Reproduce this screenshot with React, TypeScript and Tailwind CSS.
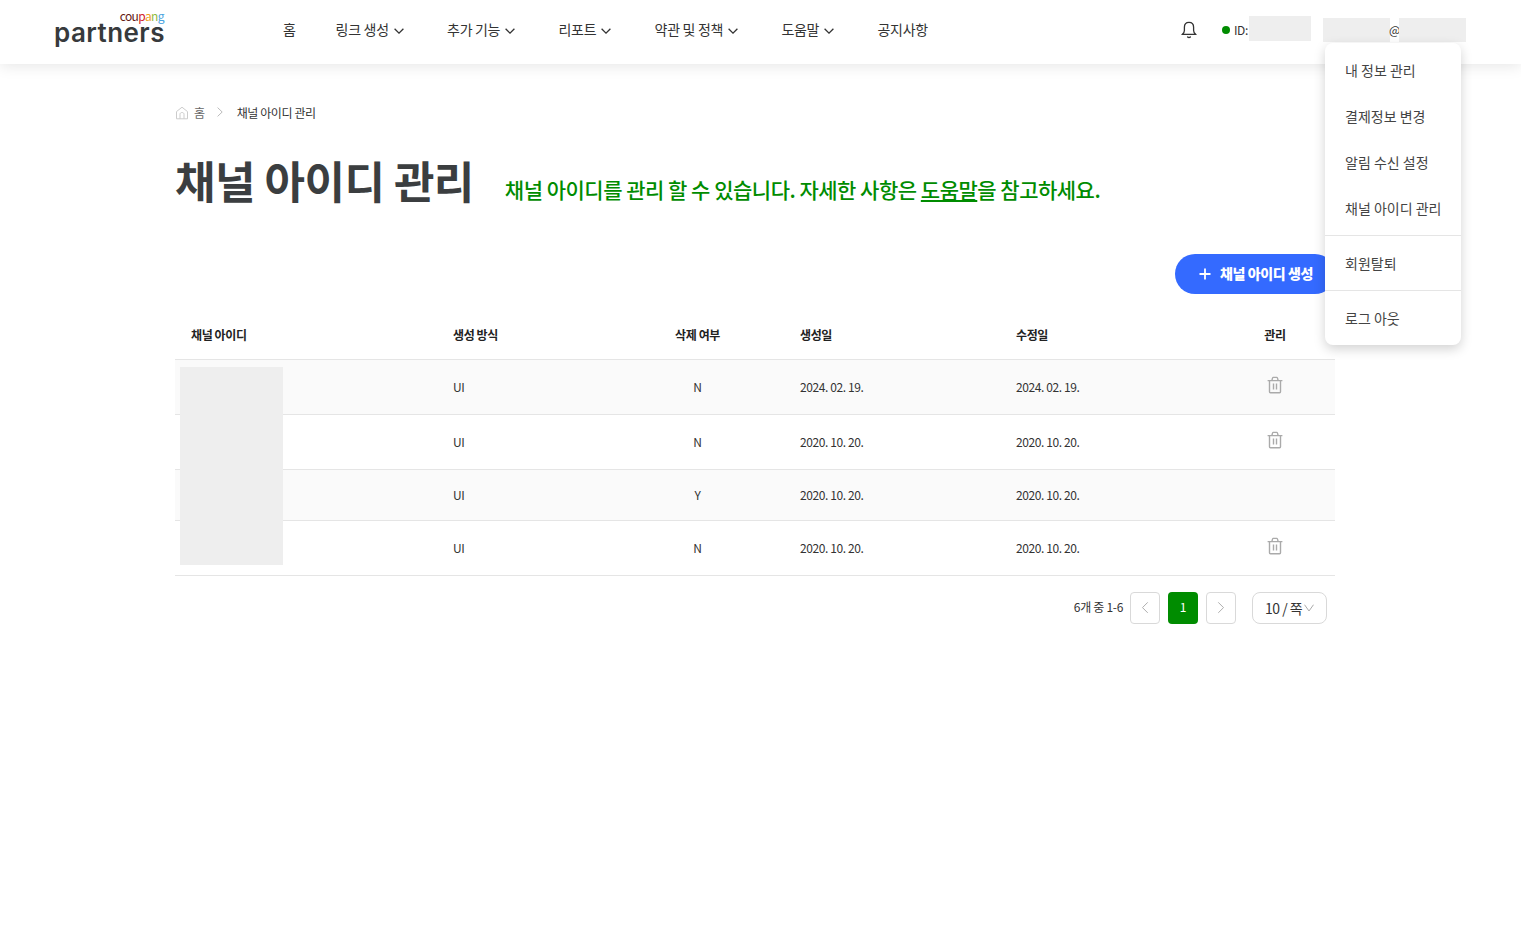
const navItems = [
  { label: "홈", menu: false },
  { label: "링크 생성", menu: true },
  { label: "추가 기능", menu: true },
  { label: "리포트", menu: true },
  { label: "약관 및 정책", menu: true },
  { label: "도움말", menu: true },
  { label: "공지사항", menu: false },
];

const rows = [
  { type: "UI", deleted: "N", created: "2024. 02. 19.", updated: "2024. 02. 19." },
  { type: "UI", deleted: "N", created: "2020. 10. 20.", updated: "2020. 10. 20." },
  { type: "UI", deleted: "Y", created: "2020. 10. 20.", updated: "2020. 10. 20." },
  { type: "UI", deleted: "N", created: "2020. 10. 20.", updated: "2020. 10. 20." },
];

const accountMenu = [
  ["내 정보 관리", "결제정보 변경", "알림 수신 설정", "채널 아이디 관리"],
  ["회원탈퇴"],
  ["로그 아웃"],
];

function Chevron({ className }: { className: string }) {
  return (
    <svg viewBox="0 0 10 6" fill="none" stroke="currentColor" className={className}>
      <path d="M0.6 0.7 5 5.1 9.4 0.7" />
    </svg>
  );
}

function BellIcon() {
  return (
    <svg viewBox="0 0 16 18" fill="none" stroke="#333" strokeWidth="1.3" strokeLinecap="round" className="h-[18px] w-4">
      <path d="M1 13.4h14M1.4 13.2c1.4-1.2 2-2.2 2-3.8V6.2C3.4 3.2 5 1.3 8 1.3s4.6 1.9 4.6 4.9v3.2c0 1.6.6 2.6 2 3.8" />
      <path d="M6.6 15.9c.8.7 2 .7 2.8 0" />
    </svg>
  );
}

function TrashIcon() {
  return (
    <svg viewBox="0 0 16 18" fill="none" stroke="#aaa" strokeWidth="1.4" className="h-[18px] w-4">
      <path d="M.6 4.6h14.8M2.5 4.6v11.2c0 .6.3.9.9.9h9.2c.6 0 .9-.3.9-.9V4.6" />
      <path d="M4.9 4.4 5.6 1.9c.1-.4.3-.5.7-.5h3.4c.4 0 .6.1.7.5l.7 2.5M6.5 7.5v6M9.5 7.5v6" />
    </svg>
  );
}

function Header() {
  return (
    <header className="flex h-16 items-start bg-white pl-[54px] shadow-[0_2px_14px_rgba(0,0,0,0.1)]">
      <div className="flex w-[229px] flex-col">
        <div className="w-[110px] pt-[9px] text-right font-['Noto_Sans_CJK_KR',sans-serif] text-[12px] leading-[13px] tracking-[-0.6px]">
          <span className="text-[#641a14]">cou</span>
          <span className="text-[#d3222d]">p</span>
          <span className="text-[#f0a01e]">a</span>
          <span className="text-[#8fbb40]">n</span>
          <span className="text-[#4aa3e0]">g</span>
        </div>
        <div className="-mt-[4px] font-[Inter,sans-serif] text-[26px] leading-[30px] font-semibold tracking-[0.45px] text-[#373a3c]">
          partners
        </div>
      </div>
      <nav className="flex h-[58px] items-center gap-10 text-[14px] text-[#333]">
        {navItems.map((item) => (
          <a key={item.label} href="#" className="flex items-center whitespace-nowrap">
            {item.label}
            {item.menu && <Chevron className="mt-[4px] mr-[3.3px] ml-[5px] w-[10px] stroke-[1.3]" />}
          </a>
        ))}
      </nav>
      <div className="ml-auto flex h-[60px] items-center pr-[55px] text-[12px] tracking-[-0.4px] text-[#333]">
        <BellIcon />
        <span className="ml-[25px] size-2 rounded-full bg-[#008c00]" />
        <span className="ml-[4px] w-[15px]">ID:</span>
        <span className="-mt-[3px] h-[25px] w-[62px] bg-[#eee]" />
        <span className="ml-3 h-6 w-[67px] bg-[#eee]" />
        <span className="-ml-px w-[10px]">@</span>
        <span className="h-6 w-[67px] bg-[#eee]" />
      </div>
    </header>
  );
}

function AccountMenu() {
  return (
    <div className="absolute top-[43px] left-[1325px] w-[136px] divide-y divide-[#e5e5e5] rounded-lg bg-white text-[14px] tracking-normal text-[#444] shadow-[0_4px_12px_rgba(0,0,0,0.18)]">
      {accountMenu.map((group) => (
        <ul key={group[0]} className="py-1">
          {group.map((label) => (
            <li key={label} className="flex h-[46px] items-center pl-5 whitespace-nowrap">
              {label}
            </li>
          ))}
        </ul>
      ))}
    </div>
  );
}

function ChannelTable() {
  return (
    <div className="relative mt-[15px]">
      <table className="w-[1160px] table-fixed border-separate border-spacing-0 text-left text-[12px] tracking-[-0.4px] text-[#333]">
        <colgroup>
          <col className="w-[262px]" />
          <col className="w-[174px]" />
          <col className="w-[173px]" />
          <col className="w-[216px]" />
          <col className="w-[215px]" />
          <col className="w-[120px]" />
        </colgroup>
        <thead>
          <tr className="h-[51px] font-bold text-[#222] [&>th]:border-b [&>th]:border-[#e5e5e5] [&>th]:px-4 [&>th]:pt-px">
            <th>채널 아이디</th>
            <th>생성 방식</th>
            <th className="text-center">삭제 여부</th>
            <th>생성일</th>
            <th>수정일</th>
            <th className="text-center">관리</th>
          </tr>
        </thead>
        <tbody>
          {rows.map((row, i) => (
            <tr
              key={i}
              className={`${row.deleted === "Y" ? "h-[51px]" : "h-[55px]"} odd:bg-[#fafafa] [&>td]:border-b [&>td]:border-[#e5e5e5] [&>td]:px-4`}
            >
              <td />
              <td>{row.type}</td>
              <td className="text-center">{row.deleted}</td>
              <td>{row.created}</td>
              <td>{row.updated}</td>
              <td>
                {row.deleted === "N" && (
                  <div className="flex justify-center pb-[5px]">
                    <TrashIcon />
                  </div>
                )}
              </td>
            </tr>
          ))}
        </tbody>
      </table>
      <div className="absolute top-[58px] left-[5px] h-[198px] w-[103px] bg-[#eee]" />
    </div>
  );
}

function Pagination() {
  return (
    <div className="mt-4 flex h-8 items-center justify-end pr-2 text-[12px] text-[#333]">
      <span className="mr-[7px] pb-[2px]">6개 중 1-6</span>
      <button className="flex h-8 w-[30px] items-center justify-center rounded border border-[#d9d9d9] text-[#aaa]">
        <Chevron className="w-3 rotate-90 stroke-[0.8]" />
      </button>
      <button className="ml-2 h-8 w-[30px] rounded bg-[#008c00] pb-[2px] text-white">1</button>
      <button className="ml-2 flex h-8 w-[30px] items-center justify-center rounded border border-[#d9d9d9] text-[#aaa]">
        <Chevron className="w-3 -rotate-90 stroke-[0.8]" />
      </button>
      <button className="ml-4 flex h-8 w-[75px] items-center rounded-lg border border-[#d9d9d9] pl-3 text-[14px] tracking-[-0.5px]">
        <span className="whitespace-nowrap">10 / 쪽</span>
        <svg viewBox="0 0 10 8" fill="none" stroke="#aaa" className="ml-[2px] w-[10px]">
          <path d="M.5.7 5 7 9.5.7" />
        </svg>
      </button>
    </div>
  );
}

export default function App() {
  return (
    <div className="relative h-[948px] w-[1521px] overflow-hidden bg-white font-['Noto_Sans_CJK_KR',sans-serif] tracking-[-0.3px]">
      <Header />
      <main className="ml-[175px] w-[1160px]">
        <div className="mt-[39px] flex h-5 items-center text-[12px] tracking-[-0.4px] text-[#666]">
          <svg viewBox="0 0 14 14" fill="none" stroke="#ccc" className="size-[14px]">
            <path d="M1.5 5.6 7 1.2l5.5 4.4v7.2h-11zM5 12.8V8.3c0-2.4 4-2.4 4 0v4.5" />
          </svg>
          <span className="ml-[5px]">홈</span>
          <svg viewBox="0 0 6 10" fill="none" stroke="#bbb" className="mt-[-2px] ml-[12px] h-[10px] w-[6px]">
            <path d="M.6.6 5.2 5 .6 9.4" />
          </svg>
          <span className="ml-[14px] text-[#333]">채널 아이디 관리</span>
        </div>
        <div className="mt-[24px] flex h-[68px] items-start">
          <h1 className="text-[44px] leading-[66px] font-bold tracking-[-0.5px] text-[#3b3e40]">채널 아이디 관리</h1>
          <p className="mt-[26px] ml-[31px] text-[21px] leading-[32px] font-medium tracking-[-0.5px] whitespace-nowrap text-[#008c00]">
            채널 아이디를 관리 할 수 있습니다. 자세한 사항은 <a href="#" className="underline">도움말</a>을 참고하세요.
          </p>
        </div>
        <div className="mt-[39px] flex justify-end">
          <button className="flex h-10 w-40 items-center rounded-full bg-[#346aff] pl-6 text-[14px] font-black tracking-[-0.4px] text-white">
            <svg viewBox="0 0 12 12" stroke="currentColor" strokeWidth="1.8" className="mr-[9px] size-3">
              <path d="M6 .5v11M.5 6h11" />
            </svg>
            <span className="pb-[2px]">채널 아이디 생성</span>
          </button>
        </div>
        <ChannelTable />
        <Pagination />
      </main>
      <AccountMenu />
    </div>
  );
}
